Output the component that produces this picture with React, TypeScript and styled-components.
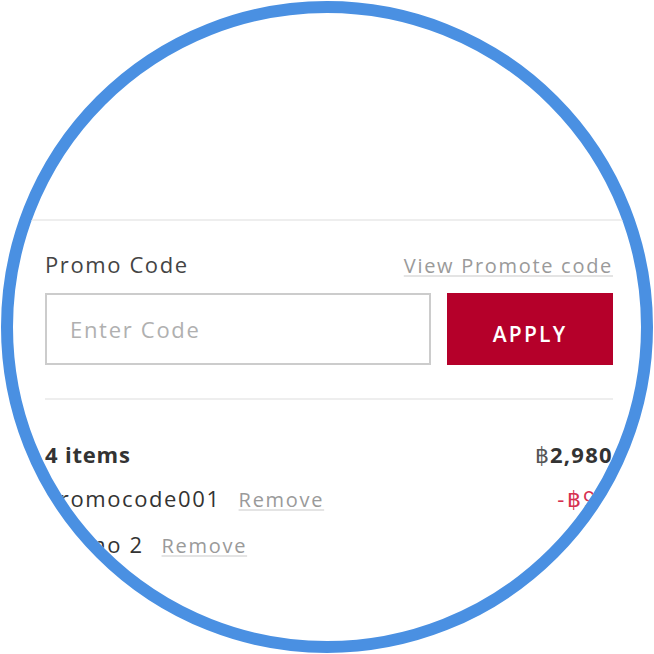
import styled, { createGlobalStyle } from "styled-components";

const GlobalStyle = createGlobalStyle`
    html, body {
        margin: 0;
        padding: 0;
        background: #ffffff;
    }
    * {
        box-sizing: border-box;
    }
`;

const PAGE = styled.div`
    width: 654px;
    height: 654px;
    display: grid;
    place-items: center;
    background: #ffffff;
    font-family: "Open Sans", "Noto Sans", sans-serif;
`;

const LENS = styled.div`
    width: 652px;
    height: 652px;
    border-radius: 50%;
    border: 12px solid #4a90e2;
    overflow: hidden;
    background: #ffffff;
    display: flex;
    flex-direction: column;
`;

const CART_AREA = styled.div`
    height: 206px;
    flex-shrink: 0;
`;

const DIVIDER = styled.div<{ $inset?: boolean }>`
    height: 2px;
    flex-shrink: 0;
    background: #eeeeee;
    margin: ${(props) => (props.$inset ? "0 28px 0 32px" : "0")};
`;

const PROMO = styled.section`
    padding: 28px 28px 33px 32px;
    display: flex;
    flex-direction: column;
    gap: 12px;
`;

const PROMO_HEAD = styled.div`
    display: flex;
    justify-content: space-between;
    align-items: baseline;
    line-height: 30px;
`;

const LABEL = styled.span`
    font-size: 22px;
    color: #444444;
    letter-spacing: 1.6px;
`;

const LINK = styled.a<{ $size?: number }>`
    font-size: ${(props) => props.$size ?? 20}px;
    color: #9a9a9a;
    letter-spacing: 1.7px;
    text-decoration: underline;
    text-decoration-color: #e4e4e4;
    text-decoration-thickness: 2px;
    text-underline-offset: 2px;
    cursor: pointer;
`;

const FORM = styled.div`
    display: flex;
    gap: 16px;
    height: 72px;
`;

const INPUT = styled.input`
    flex: 1;
    min-width: 0;
    height: 100%;
    border: 2px solid #cccccc;
    padding: 0 23px;
    font-family: inherit;
    font-size: 22px;
    letter-spacing: 1.7px;
    color: #444444;
    outline: none;

    &::placeholder {
        color: #b0b0b0;
    }
`;

const BUTTON = styled.button`
    width: 166px;
    height: 100%;
    border: none;
    background: #b5002a;
    color: #ffffff;
    font-family: inherit;
    font-size: 21px;
    font-weight: 600;
    letter-spacing: 2.2px;
    padding-top: 10px;
`;

const SUMMARY = styled.section`
    padding: 39px 28px 0 32px;
    display: flex;
    flex-direction: column;
    gap: 14px;
`;

const ROW = styled.div`
    display: flex;
    justify-content: space-between;
    align-items: baseline;
    white-space: nowrap;
    line-height: 30px;
`;

const LEFT = styled.div`
    display: flex;
    align-items: baseline;
    gap: 18px;
`;

const TOTAL_LABEL = styled.span`
    font-size: 22px;
    font-weight: 700;
    color: #333333;
    letter-spacing: 0.8px;
`;

const AMOUNT = styled.span`
    font-size: 22px;
    font-weight: 700;
    color: #333333;
    letter-spacing: 1.3px;

    & i {
        font-style: normal;
        font-weight: 400;
        color: #555555;
    }
`;

const CODE = styled.span`
    font-size: 22px;
    color: #333333;
    letter-spacing: 1.6px;
`;

const DISCOUNT = styled.span`
    font-size: 22px;
    color: #d63150;
    letter-spacing: 2.4px;
`;

interface Promo {
    code: string;
    discount: number;
}

const promos: Promo[] = [
    { code: "Promocode001", discount: 90 },
    { code: "Promo 2", discount: 50 },
];

const App: React.FC = () => {
    return (
        <PAGE>
            <GlobalStyle />
            <LENS>
                <CART_AREA />
                <DIVIDER />
                <PROMO>
                    <PROMO_HEAD>
                        <LABEL>Promo Code</LABEL>
                        <LINK>View Promote code</LINK>
                    </PROMO_HEAD>
                    <FORM>
                        <INPUT placeholder="Enter Code" />
                        <BUTTON>APPLY</BUTTON>
                    </FORM>
                </PROMO>
                <DIVIDER $inset />
                <SUMMARY>
                    <ROW>
                        <TOTAL_LABEL>4 items</TOTAL_LABEL>
                        <AMOUNT>
                            <i>฿</i>2,980
                        </AMOUNT>
                    </ROW>
                    {promos.map((promo) => (
                        <ROW key={promo.code}>
                            <LEFT>
                                <CODE>{promo.code}</CODE>
                                <LINK>Remove</LINK>
                            </LEFT>
                            <DISCOUNT>-฿{promo.discount}</DISCOUNT>
                        </ROW>
                    ))}
                </SUMMARY>
            </LENS>
        </PAGE>
    );
};

export default App;
